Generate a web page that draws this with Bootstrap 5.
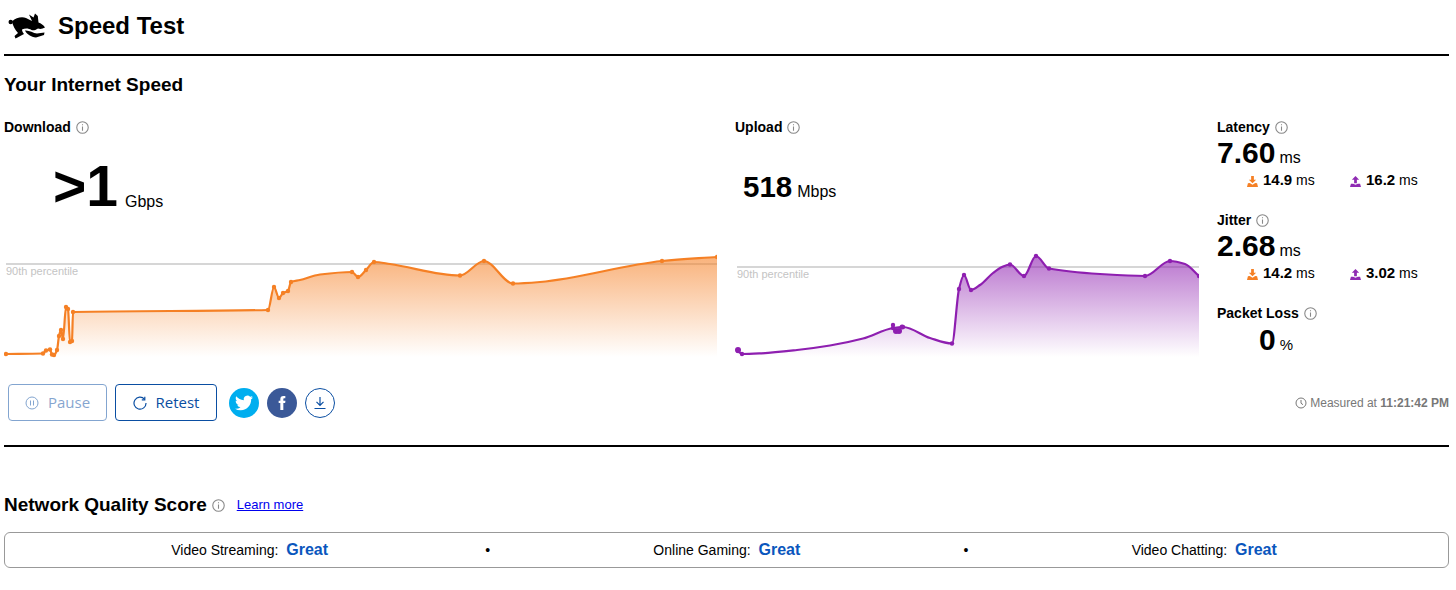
<!DOCTYPE html>
<html lang="en">
<head>
    <meta charset="UTF-8">
    <meta name="viewport" content="width=device-width, initial-scale=1.0">
    <title>Speed Test</title>
    <link href="https://cdn.jsdelivr.net/npm/bootstrap@5.3.0/dist/css/bootstrap.min.css" rel="stylesheet">
    <style>
        body {
            font-family: "Liberation Sans", Arial, sans-serif;
            color: #000;
            background: #fff;
            padding: 0 7px 0 4px;
        }
        .top-bar {
            height: 56px;
            border-bottom: 2px solid #000;
            padding: 0 0 2px 4px;
            gap: 13px;
        }
        .top-bar h1 {
            font-size: 24px;
            font-weight: 700;
            margin: 0;
        }
        .section-title {
            font-size: 19px;
            font-weight: 700;
            margin: 0;
        }
        .speed-title {
            padding-top: 18px;
            height: 64px;
            line-height: 22px;
        }
        .metric-label {
            font-size: 14px;
            font-weight: 700;
            line-height: 15px;
        }
        .info-icon {
            width: 13px;
            height: 13px;
            margin-left: 5px;
            flex-shrink: 0;
        }
        .col-download { width: 713px; margin-right: 18px; }
        .col-upload { width: 464px; margin-right: 18px; }
        .col-stats { width: 228px; }
        .big-number {
            height: 87px;
            padding-left: 49px;
            margin-top: 1px;
        }
        .big-number b { font-size: 57px; line-height: 73px; }
        .big-number span { font-size: 16px; margin-left: 7px; padding-bottom: 9px; }
        .mid-number {
            height: 87px;
            padding-left: 8px;
            margin-top: 1px;
        }
        .mid-number b { font-size: 29.500px; line-height: 73px; }
        .mid-number span { font-size: 16px; margin-left: 5px; padding-bottom: 19px; }
        .chart-box { display: block; width: 100%; height: 136px; }
        .stat-value { line-height: 36px; height: 33px; }
        .stat-value b { font-size: 30px; }
        .stat-value span { font-size: 16px; margin-left: 4px; }
        .stat-sub {
            font-size: 14px;
            line-height: 18px;
            padding-left: 30px;
            height: 45px;
            padding-top: 3px;
        }
        .stat-sub > div:first-child { width: 103px; }
        .stat-sub b { font-size: 15px; }
        .stat-sub svg { width: 11px; height: 11px; margin-right: 5px; }
        .loss-value { padding: 1px 0 0 42px; line-height: 36px; }
        .loss-value b { font-size: 30px; }
        .loss-value span { font-size: 15px; margin-left: 4px; }
        .action-row {
            height: 63px;
            margin-top: 21px;
            padding-left: 4px;
            border-bottom: 2px solid #000;
            padding-bottom: 24px;
        }
        .test-btn {
            font-family: "Open Sans", sans-serif;
            font-size: 15px;
            height: 37px;
            color: #0a4ea2;
            border: 1px solid #0a4ea2;
            border-radius: 4px;
            background: #fff;
            display: flex;
            align-items: center;
            justify-content: center;
            gap: 9px;
            padding: 0;
        }
        .test-btn svg { width: 14px; height: 14px; }
        .btn-pause { width: 99px; opacity: .5; margin-right: 8px; }
        .btn-retest { width: 102px; margin-right: 12px; }
        .round-btn {
            width: 30px;
            height: 30px;
            border-radius: 50%;
            margin-right: 8px;
            display: flex;
            align-items: center;
            justify-content: center;
        }
        .round-twitter { background: #00aeef; }
        .round-facebook { background: #3b5998; }
        .round-save { border: 1px solid #0a4ea2; }
        .measured {
            font-size: 12px;
            color: #777;
            margin-left: auto;
            gap: 3px;
        }
        .measured svg { width: 12px; height: 12px; }
        .score-head {
            margin-top: 45px;
            height: 26px;
        }
        .score-head a { font-size: 13px; color: #00e; margin-left: 12px; }
        .score-head .info-icon { margin-left: 5px; }
        .score-box {
            height: 36px;
            margin-top: 14px;
            padding: 0 8px 0 3px;
            border: 1px solid #999;
            border-radius: 6px;
            font-size: 14px;
        }
        .score-box > div:first-child { margin-right: -6px; }
        .score-box b { font-size: 16px; color: #0a56bd; margin-left: 4px; }
    </style>
</head>
<body>
    <div class="top-bar d-flex align-items-center">
        <svg width="37" height="26" viewBox="0 0 37 26" aria-hidden="true" fill="#000">
            <circle cx="2.700" cy="9" r="2.200"/>
            <path d="M4 8.500C8 4.500 14 3.500 18 5L24 8 21 1.500 25.500 4.500 27 .5 29.800 3 30.500 9.500C33 10.500 35.500 12 37 14.500 34.500 16 32 16.200 30 15.500 27 17.500 25 17.500 23.500 17 20.500 15 17 15 14 16.500 14 18 15 20 16 21L9.500 24.500 7.500 25.500 6.500 23 10 20C7 17 5 13 4 8.500Z"/>
            <path d="M17 17.500C21 17 25 20 29 20.500L36.500 19.500 36 22 28 24.500C23 24 19 21.500 17 17.500Z"/>
        </svg>
        <h1>Speed Test</h1>
    </div>

    <h2 class="section-title speed-title">Your Internet Speed</h2>

    <div class="d-flex">
        <div class="col-download">
            <div class="metric-label d-flex align-items-center">Download
                <svg class="info-icon" viewBox="0 0 12 12"><use href="#icon-info"/></svg>
            </div>
            <div class="big-number d-flex align-items-end"><b>&gt;1</b><span>Gbps</span></div>
            <svg class="chart-box" id="chartDown" viewBox="4 223 713 136" preserveAspectRatio="none"></svg>
        </div>
        <div class="col-upload">
            <div class="metric-label d-flex align-items-center">Upload
                <svg class="info-icon" viewBox="0 0 12 12"><use href="#icon-info"/></svg>
            </div>
            <div class="mid-number d-flex align-items-end"><b>518</b><span>Mbps</span></div>
            <svg class="chart-box" id="chartUp" viewBox="735 223 464 136" preserveAspectRatio="none"></svg>
        </div>
        <div class="col-stats">
            <div class="metric-label d-flex align-items-center">Latency
                <svg class="info-icon" viewBox="0 0 12 12"><use href="#icon-info"/></svg>
            </div>
            <div class="stat-value"><b>7.60</b><span>ms</span></div>
            <div class="stat-sub d-flex">
                <div><svg viewBox="0 0 12 12"><use href="#icon-down"/></svg><b>14.9</b> ms</div>
                <div><svg viewBox="0 0 12 12"><use href="#icon-up"/></svg><b>16.2</b> ms</div>
            </div>
            <div class="metric-label d-flex align-items-center">Jitter
                <svg class="info-icon" viewBox="0 0 12 12"><use href="#icon-info"/></svg>
            </div>
            <div class="stat-value"><b>2.68</b><span>ms</span></div>
            <div class="stat-sub d-flex">
                <div><svg viewBox="0 0 12 12"><use href="#icon-down"/></svg><b>14.2</b> ms</div>
                <div><svg viewBox="0 0 12 12"><use href="#icon-up"/></svg><b>3.02</b> ms</div>
            </div>
            <div class="metric-label d-flex align-items-center">Packet Loss
                <svg class="info-icon" viewBox="0 0 12 12"><use href="#icon-info"/></svg>
            </div>
            <div class="loss-value"><b>0</b><span>%</span></div>
        </div>
    </div>

    <div class="action-row d-flex align-items-center">
        <button class="test-btn btn-pause">
            <svg viewBox="0 0 14 14" fill="none" stroke="currentColor"><circle cx="7" cy="7" r="6"/><path d="M5.500 4.500v5M8.500 4.500v5"/></svg>
            Pause
        </button>
        <button class="test-btn btn-retest">
            <svg viewBox="0 0 14 14" fill="none" stroke="currentColor" stroke-width="1.200"><path d="M11.500 3.200A6 6 0 1 0 13 7"/><path d="M11.800 .8v3h-3"/></svg>
            Retest
        </button>
        <div class="round-btn round-twitter">
            <svg width="18" height="18" viewBox="0 0 24 24"><path fill="#fff" d="M23.953 4.570a10 10 0 0 1-2.825.775 4.958 4.958 0 0 0 2.163-2.723c-.951.555-2.005.959-3.127 1.184a4.920 4.920 0 0 0-8.384 4.482C7.690 8.095 4.067 6.130 1.640 3.162a4.822 4.822 0 0 0-.666 2.475c0 1.710.870 3.213 2.188 4.096a4.904 4.904 0 0 1-2.228-.616v.060a4.923 4.923 0 0 0 3.946 4.827 4.996 4.996 0 0 1-2.212.085 4.936 4.936 0 0 0 4.604 3.417 9.867 9.867 0 0 1-6.102 2.105c-.390 0-.779-.023-1.170-.067a13.995 13.995 0 0 0 7.557 2.209c9.053 0 13.998-7.496 13.998-13.985 0-.210 0-.420-.015-.630A9.935 9.935 0 0 0 24 4.590z"/></svg>
        </div>
        <div class="round-btn round-facebook">
            <svg width="16" height="16" viewBox="0 0 24 24"><path fill="#fff" d="M14 8.500V6.300c0-1 .6-1.300 1.300-1.300H17V1.500h-3c-3 0-4.500 2-4.500 4.500v2.500H7V12h2.500v10.500H14V12h2.700l.5-3.500z"/></svg>
        </div>
        <div class="round-btn round-save">
            <svg width="14" height="14" viewBox="0 0 14 14" fill="none" stroke="#0a4ea2" stroke-width="1.200"><path d="M7 1v8M3.500 5.800 7 9.300l3.500-3.500M1.500 12.500h11"/></svg>
        </div>
        <div class="measured d-flex align-items-center">
            <svg viewBox="0 0 12 12" fill="none" stroke="#777"><circle cx="6" cy="6" r="5"/><path d="M6 3v3.200l2 1.500"/></svg>
            <span>Measured at <b>11:21:42 PM</b></span>
        </div>
    </div>

    <div class="score-head d-flex align-items-center">
        <h2 class="section-title">Network Quality Score</h2>
        <svg class="info-icon" viewBox="0 0 12 12"><use href="#icon-info"/></svg>
        <a href="#">Learn more</a>
    </div>
    <div class="score-box d-flex align-items-center justify-content-evenly">
        <div>Video Streaming: <b>Great</b></div>
        <div>&bull;</div>
        <div>Online Gaming: <b>Great</b></div>
        <div>&bull;</div>
        <div>Video Chatting: <b>Great</b></div>
    </div>

    <svg width="0" height="0" class="position-absolute">
        <defs>
            <g id="icon-info" fill="none" stroke="#888">
                <circle cx="6" cy="6" r="5.300"/>
                <path d="M6 5v4M6 3v1"/>
            </g>
            <g id="icon-down" fill="#f58025">
                <path d="M4.500 0h3v4H10L6 8 2 4h2.500z"/>
                <path d="M1 8 3 7.500 6 9.500 9 7.500 11 8 12 12H0z"/>
            </g>
            <g id="icon-up" fill="#8f2bb3">
                <path d="M6 0l4 4H7.500v4h-3V4H2z"/>
                <path d="M1 8.500h2.500L6 9.500 8.500 8.500H11l1 3.500H0z"/>
            </g>
            <linearGradient id="fadeDown" x1="0" y1="0" x2="0" y2="1">
                <stop offset="0" stop-color="#f58025" stop-opacity=".6"/>
                <stop offset="1" stop-color="#f58025" stop-opacity="0"/>
            </linearGradient>
            <linearGradient id="fadeUp" x1="0" y1="0" x2="0" y2="1">
                <stop offset="0" stop-color="#8e1fb0" stop-opacity=".62"/>
                <stop offset="1" stop-color="#8e1fb0" stop-opacity="0"/>
            </linearGradient>
        </defs>
    </svg>

    <script>
        var downPoints = [[6,354],[43,353.5],[46,350.5],[50,349.5],[52,354.5],[54,355],[57,350],[59,336],[61,330],[63,339],[66,307],[68,309],[70,342],[72,341],[73,312],[268,310],[274,287],[279,298],[283,293],[288,291],[291,282],[300,280],[320,274.5],[352,272],[358,277],[366,270],[374,262],[390,264],[460,275.5],[484,261],[513,283.5],[540,282],[662,261],[717,257]];
        var upPoints = [[738,351],[742,354],[760,353.4],[797,350],[830,345.5],[863,338.5],[893,328],[903,327],[930,338],[952,343.5],[959,289],[964,275],[971,290],[980,285],[993,273],[1002,267],[1010,264.5],[1024,276],[1036,256],[1049,268.5],[1100,274],[1145,276],[1170,261],[1185,264],[1199,276]];
        var dotsDown = [0,1,2,3,4,5,6,7,8,9,10,11,12,13,14,15,16,17,18,19,20,23,24,25,26,28,29,30,32,33];
        var dotsUp = [0,1,6,7,9,10,11,12,16,17,18,19,21,22,24];
        // the samples bunched up at the start and around 11:21:30
        var blobsUp = [[738,350,3],[896,331,3],[899,331,3],[893,325,2.2],[902,327,2.5]];

        // monotone cubic through the samples, dips at the spikes stay sharp
        function smoothPath(pts) {
            var n = pts.length, m = [], d = 'M' + pts[0][0] + ' ' + pts[0][1];
            var slope = function(a, b) { return (b[1] - a[1]) / (b[0] - a[0]); };
            for (var i = 0; i < n; i++) {
                if (i === 0) m[i] = slope(pts[0], pts[1]);
                else if (i === n - 1) m[i] = slope(pts[n - 2], pts[n - 1]);
                else {
                    var s0 = slope(pts[i - 1], pts[i]), s1 = slope(pts[i], pts[i + 1]);
                    m[i] = s0 * s1 <= 0 ? 0 : 2 * s0 * s1 / (s0 + s1);
                }
            }
            for (var j = 0; j < n - 1; j++) {
                var h = (pts[j + 1][0] - pts[j][0]) / 3;
                d += 'C' + (pts[j][0] + h) + ' ' + (pts[j][1] + m[j] * h) + ' ' +
                    (pts[j + 1][0] - h) + ' ' + (pts[j + 1][1] - m[j + 1] * h) + ' ' +
                    pts[j + 1][0] + ' ' + pts[j + 1][1];
            }
            return d;
        }

        function drawChart(id, pts, dots, blobs, color, fill, lineY, x0, x1) {
            var line = smoothPath(pts);
            var last = pts[pts.length - 1][0];
            var html = '<path d="M' + x0 + ' ' + lineY + 'H' + x1 + '" stroke="#c8c8c8" stroke-width="1.500"/>';
            html += '<text x="' + x0 + '" y="' + (lineY + 11) + '" font-size="11" fill="#c4c4c4">90th percentile</text>';
            html += '<path d="' + line + 'L' + last + ' 357L' + pts[0][0] + ' 357Z" fill="url(#' + fill + ')"/>';
            html += '<path d="' + line + '" fill="none" stroke="' + color + '" stroke-width="2.200"/>';
            dots.forEach(function(i) {
                html += '<circle cx="' + pts[i][0] + '" cy="' + pts[i][1] + '" r="2.200" fill="' + color + '"/>';
            });
            blobs.forEach(function(b) {
                html += '<circle cx="' + b[0] + '" cy="' + b[1] + '" r="' + b[2] + '" fill="' + color + '"/>';
            });
            document.getElementById(id).innerHTML = html;
        }

        drawChart('chartDown', downPoints, dotsDown, [], '#f58025', 'fadeDown', 264, 6, 717);
        drawChart('chartUp', upPoints, dotsUp, blobsUp, '#8e1fb0', 'fadeUp', 267, 737, 1199);
    </script>
    <script src="https://cdn.jsdelivr.net/npm/bootstrap@5.3.0/dist/js/bootstrap.bundle.min.js"></script>
</body>
</html>
